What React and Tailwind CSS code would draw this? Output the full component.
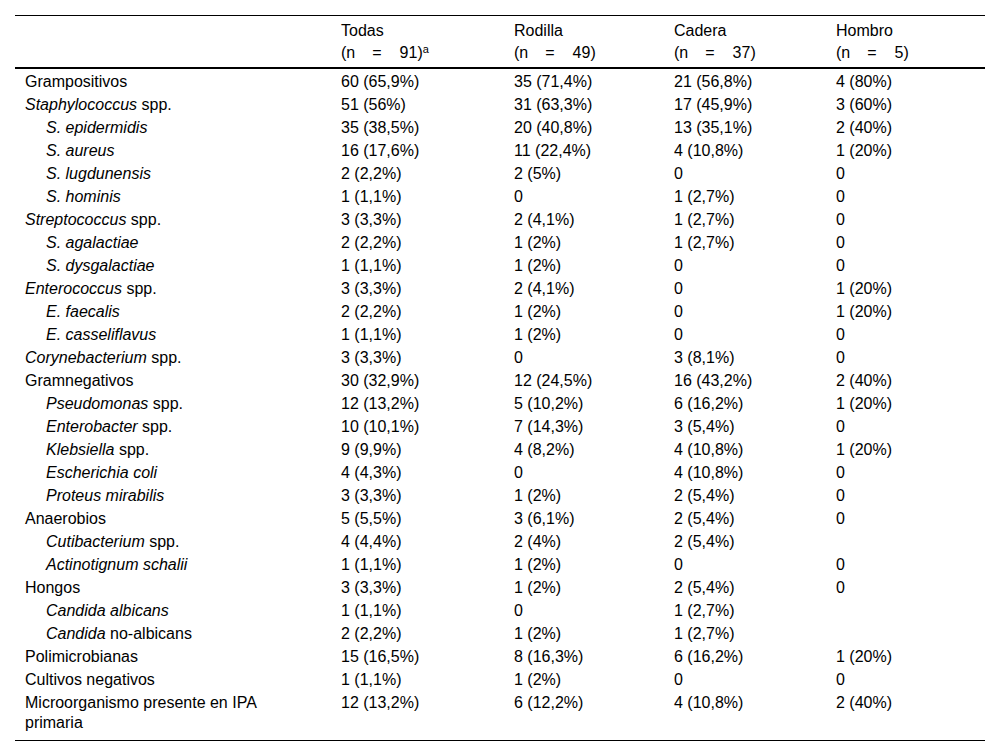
import React from "react";

const rows = [
  { l: "Grampositivos", v: ["60 (65,9%)", "35 (71,4%)", "21 (56,8%)", "4 (80%)"] },
  { l: <><i>Staphylococcus</i> spp.</>, v: ["51 (56%)", "31 (63,3%)", "17 (45,9%)", "3 (60%)"] },
  { l: <i>S. epidermidis</i>, ind: true, v: ["35 (38,5%)", "20 (40,8%)", "13 (35,1%)", "2 (40%)"] },
  { l: <i>S. aureus</i>, ind: true, v: ["16 (17,6%)", "11 (22,4%)", "4 (10,8%)", "1 (20%)"] },
  { l: <i>S. lugdunensis</i>, ind: true, v: ["2 (2,2%)", "2 (5%)", "0", "0"] },
  { l: <i>S. hominis</i>, ind: true, v: ["1 (1,1%)", "0", "1 (2,7%)", "0"] },
  { l: <><i>Streptococcus</i> spp.</>, v: ["3 (3,3%)", "2 (4,1%)", "1 (2,7%)", "0"] },
  { l: <i>S. agalactiae</i>, ind: true, v: ["2 (2,2%)", "1 (2%)", "1 (2,7%)", "0"] },
  { l: <i>S. dysgalactiae</i>, ind: true, v: ["1 (1,1%)", "1 (2%)", "0", "0"] },
  { l: <><i>Enterococcus</i> spp.</>, v: ["3 (3,3%)", "2 (4,1%)", "0", "1 (20%)"] },
  { l: <i>E. faecalis</i>, ind: true, v: ["2 (2,2%)", "1 (2%)", "0", "1 (20%)"] },
  { l: <i>E. casseliflavus</i>, ind: true, v: ["1 (1,1%)", "1 (2%)", "0", "0"] },
  { l: <><i>Corynebacterium</i> spp.</>, v: ["3 (3,3%)", "0", "3 (8,1%)", "0"] },
  { l: "Gramnegativos", v: ["30 (32,9%)", "12 (24,5%)", "16 (43,2%)", "2 (40%)"] },
  { l: <><i>Pseudomonas</i> spp.</>, ind: true, v: ["12 (13,2%)", "5 (10,2%)", "6 (16,2%)", "1 (20%)"] },
  { l: <><i>Enterobacter</i> spp.</>, ind: true, v: ["10 (10,1%)", "7 (14,3%)", "3 (5,4%)", "0"] },
  { l: <><i>Klebsiella</i> spp.</>, ind: true, v: ["9 (9,9%)", "4 (8,2%)", "4 (10,8%)", "1 (20%)"] },
  { l: <i>Escherichia coli</i>, ind: true, v: ["4 (4,3%)", "0", "4 (10,8%)", "0"] },
  { l: <i>Proteus mirabilis</i>, ind: true, v: ["3 (3,3%)", "1 (2%)", "2 (5,4%)", "0"] },
  { l: "Anaerobios", v: ["5 (5,5%)", "3 (6,1%)", "2 (5,4%)", "0"] },
  { l: <><i>Cutibacterium</i> spp.</>, ind: true, v: ["4 (4,4%)", "2 (4%)", "2 (5,4%)", ""] },
  { l: <i>Actinotignum schalii</i>, ind: true, v: ["1 (1,1%)", "1 (2%)", "0", "0"] },
  { l: "Hongos", v: ["3 (3,3%)", "1 (2%)", "2 (5,4%)", "0"] },
  { l: <i>Candida albicans</i>, ind: true, v: ["1 (1,1%)", "0", "1 (2,7%)", ""] },
  { l: <><i>Candida</i> no-albicans</>, ind: true, v: ["2 (2,2%)", "1 (2%)", "1 (2,7%)", ""] },
  { l: "Polimicrobianas", v: ["15 (16,5%)", "8 (16,3%)", "6 (16,2%)", "1 (20%)"] },
  { l: "Cultivos negativos", v: ["1 (1,1%)", "1 (2%)", "0", "0"] },
  { l: <>Microorganismo presente en IPA<br />primaria</>, last: true, v: ["12 (13,2%)", "6 (12,2%)", "4 (10,8%)", "2 (40%)"] },
];

function N({ n, sup }) {
  return (
    <span>
      (n<span className="inline-block w-[17px]" />=<span className="inline-block w-[18px]" />
      {n})
      {sup && <sup className="text-[11px]">a</sup>}
    </span>
  );
}

const heads = [
  ["Todas", "91", true],
  ["Rodilla", "49"],
  ["Cadera", "37"],
  ["Hombro", "5"],
];

export default function App() {
  return (
    <div className="w-[1000px] h-[756px] bg-white text-black font-['Liberation_Sans',Arial,sans-serif] text-[16px]">
      <div className="pt-[15px] px-[15px]">
        <table className="w-[970px] table-fixed border-collapse">
          <colgroup>
            <col className="w-[316px]" />
            <col className="w-[173px]" />
            <col className="w-[160px]" />
            <col className="w-[162px]" />
            <col className="w-[159px]" />
          </colgroup>
          <thead>
            <tr className="border-t border-black border-b-2">
              <th className="p-0" />
              {heads.map(([h, n, sup]) => (
                <th key={h} className="text-left font-normal align-top pl-[10px] pt-[4px] pb-[3px] leading-[22px]">
                  <div>{h}</div>
                  <div>
                    <N n={n} sup={sup} />
                  </div>
                </th>
              ))}
            </tr>
          </thead>
          <tbody>
            {rows.map((r, i) => (
              <tr key={i} className={r.last ? "border-b border-black" : ""}>
                <td
                  className={`align-top leading-[20px] pt-[3px] ${r.last ? "pb-[7px]" : "pb-0"} ${r.ind ? "pl-[31px]" : "pl-[10px]"}`}
                >
                  {r.l}
                </td>
                {r.v.map((v, j) => (
                  <td key={j} className={`align-top leading-[20px] pt-[3px] pl-[10px] ${r.last ? "pb-[7px]" : "pb-0"}`}>
                    {v}
                  </td>
                ))}
              </tr>
            ))}
          </tbody>
        </table>
      </div>
    </div>
  );
}
